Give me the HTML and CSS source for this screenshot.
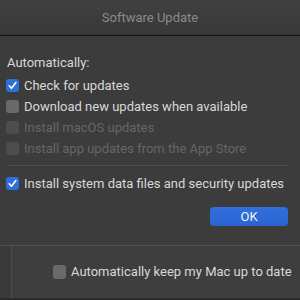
FILE: index.html
```html
<!DOCTYPE html>
<html>
<head>
<meta charset="utf-8">
<link rel="stylesheet" href="styles.css">
</head>
<body>
<div class="window">
  <div class="titlebar">Software Update</div>
  <div class="sheet">
    <div class="heading">Automatically:</div>
    <div class="row"><span class="box checked"><svg viewBox="0 0 13 13" width="13" height="13"><path d="M3.2 6.8 L5.5 9.3 L9.9 3.6" fill="none" stroke="#fff" stroke-width="1.6" stroke-linecap="round" stroke-linejoin="round"/></svg></span><span class="label">Check for updates</span></div>
    <div class="row"><span class="box"></span><span class="label">Download new updates when available</span></div>
    <div class="row disabled"><span class="box"></span><span class="label">Install macOS updates</span></div>
    <div class="row disabled"><span class="box"></span><span class="label">Install app updates from the App Store</span></div>
    <div class="separator"></div>
    <div class="row"><span class="box checked"><svg viewBox="0 0 13 13" width="13" height="13"><path d="M3.2 6.8 L5.5 9.3 L9.9 3.6" fill="none" stroke="#fff" stroke-width="1.6" stroke-linecap="round" stroke-linejoin="round"/></svg></span><span class="label">Install system data files and security updates</span></div>
    <div class="actions"><button class="ok">OK</button></div>
  </div>
  <div class="lower">
    <div class="sidebar"></div>
    <div class="lower-main">
      <div class="row"><span class="box big"></span><span class="label">Automatically keep my Mac up to date</span></div>
    </div>
  </div>
</div>
</body>
</html>
```

FILE: styles.css
```css
* { box-sizing: border-box; }
html, body { margin: 0; padding: 0; }
body {
  width: 300px;
  height: 300px;
  overflow: hidden;
  background: #3b3b3b;
  font-family: Roboto, "Noto Sans", sans-serif;
  font-size: 13px;
  color: #d8d8d8;
}
.window { display: flex; flex-direction: column; height: 300px; }
.titlebar {
  height: 36px;
  flex: none;
  display: flex;
  align-items: center;
  justify-content: center;
  padding-bottom: 1px;
  background: linear-gradient(#404040, #383838);
  border-bottom: 1px solid #141414;
  color: #8a8a8a;
  font-size: 13px;
}
.sheet {
  background: #3c3c3c;
  padding: 19px 12px 19px 6px;
  border-bottom: 1px solid #505050;
  flex: none;
}
.heading { line-height: 16px; margin: 0 0 4px 1px; }
.row {
  display: flex;
  align-items: center;
  gap: 5px;
  height: 21px;
  white-space: nowrap;
}
.box {
  width: 13px;
  height: 13px;
  border-radius: 3px;
  background: #6a6a6a;
  flex: none;
  display: block;
}
.box svg { display: block; }
.box.checked { background: #2f6fd9; }
.row.disabled .label { color: #666666; }
.row.disabled .box { background: #4d4d4d; }
.separator {
  height: 1px;
  background: #4f4f4f;
  margin: 6px 0 7px 1px;
}
.actions { display: flex; justify-content: flex-end; margin-top: 13px; }
.ok {
  width: 78px;
  height: 19px;
  border: none;
  border-radius: 4px;
  background: linear-gradient(#316fdc, #2b64d2);
  color: #f2f2f2;
  font-family: Roboto, "Noto Sans", sans-serif;
  font-size: 13px;
  padding: 0;
}
.lower { flex: 1; display: flex; background: #3e3e3e; border-bottom: 2px solid #2a2a2a; }
.sidebar { width: 12px; background: #3a3a3a; border-right: 1px solid #4c4c4c; flex: none; }
.lower-main { flex: 1; padding: 15px 0 0 41px; }
.box.big { width: 13px; height: 14px; background: #6a6a6a; }
.lower .row { gap: 5px; }
```
